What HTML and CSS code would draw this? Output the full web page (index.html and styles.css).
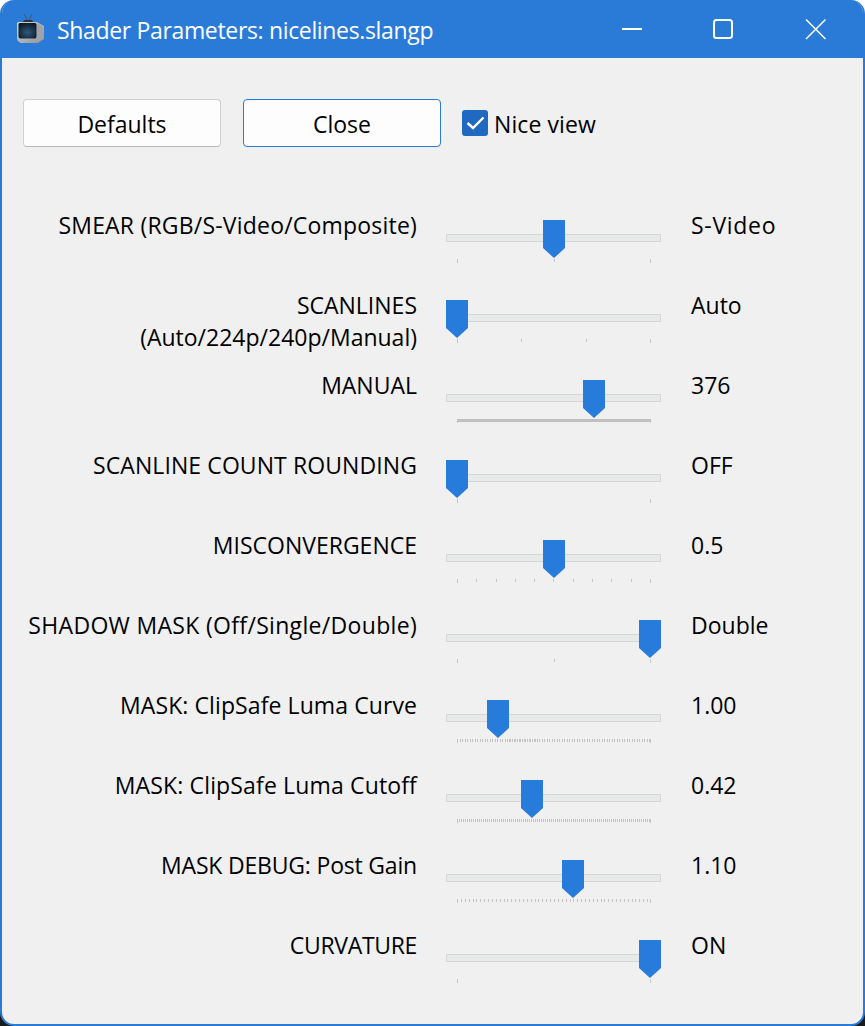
FILE: index.html
```html
<!DOCTYPE html>
<html lang="en">
<head>
<meta charset="utf-8">
<title>Shader Parameters: nicelines.slangp</title>
<link rel="stylesheet" href="styles.css">
</head>
<body>
<div class="window">
  <header class="titlebar">
    <svg class="app-icon" width="28" height="30" viewBox="0 0 28 30">
      <defs>
        <linearGradient id="tvbody" x1="0" y1="0" x2="1" y2="1"><stop offset="0" stop-color="#d4d6da"/><stop offset="1" stop-color="#8f9296"/></linearGradient>
        <radialGradient id="tvscreen" cx="0.5" cy="0.6" r="0.65"><stop offset="0" stop-color="#2f5a80"/><stop offset="1" stop-color="#0d1722"/></radialGradient>
      </defs>
      <path d="M7 0 L10.5 6 M15 0.5 L12 6" stroke="#4a5560" stroke-width="1" fill="none"/>
      <path d="M7 6 H15 L16 8 H6 Z" fill="#2c343c"/>
      <path d="M1 8 H20 L27 12 V25 L21 29 H4 Q0 28 0 24 V9 Z" fill="url(#tvbody)"/>
      <path d="M20 9 L26 12.5 V25 L20 28 Z" fill="#a0a3a8"/>
      <path d="M2.5 9 H18 Q19.5 9 19.5 11 V22 Q19.5 24.5 18 24.5 H3.5 Q1.5 24.5 1.5 22 V10.5 Q1.5 9 2.5 9 Z" fill="url(#tvscreen)"/>
    </svg>
    <span class="title">Shader Parameters: nicelines.slangp</span>
    <div class="win-controls">
      <svg class="win-btn" width="92" height="58" viewBox="0 0 92 58"><path d="M36 29 H56" stroke="#fff" stroke-width="2"/></svg>
      <svg class="win-btn" width="92" height="58" viewBox="0 0 92 58"><rect x="36" y="20" width="18" height="18" rx="2.5" fill="none" stroke="#fff" stroke-width="2"/></svg>
      <svg class="win-btn" width="92" height="58" viewBox="0 0 92 58"><path d="M36 19.5 L55.5 39 M55.5 19.5 L36 39" stroke="#fff" stroke-width="1.5" fill="none"/></svg>
    </div>
  </header>
  <main class="content">
    <div class="toolbar">
      <button class="btn">Defaults</button>
      <button class="btn btn-focus">Close</button>
      <label class="check">
        <span class="check-box"><svg width="26" height="26" viewBox="0 0 26 26"><path d="M5.5 13 L11 18 L21.5 7.5" fill="none" stroke="#fff" stroke-width="2.4"/></svg></span>
        <span class="check-text">Nice view</span>
      </label>
    </div>
    <div class="params">
      <div class="label ls-p2">SMEAR (RGB/S-Video/Composite)</div>
      <div class="slider"><div class="track"><span class="thumb" style="left:97px"></span></div><div class="ticks"><i></i><i></i><i></i></div></div>
      <div class="value ls-p6">S-Video</div>

      <div class="label">SCANLINES<br>(Auto/224p/240p/Manual)</div>
      <div class="slider"><div class="track"><span class="thumb" style="left:0"></span></div><div class="ticks"><i></i><i></i><i></i><i></i></div></div>
      <div class="value">Auto</div>

      <div class="label">MANUAL</div>
      <div class="slider"><div class="track"><span class="thumb" style="left:137px"></span></div><div class="ticks ticks-solid"><i></i><i></i></div></div>
      <div class="value">376</div>

      <div class="label ls-p1">SCANLINE COUNT ROUNDING</div>
      <div class="slider"><div class="track"><span class="thumb" style="left:0"></span></div><div class="ticks"><i></i><i></i></div></div>
      <div class="value">OFF</div>

      <div class="label">MISCONVERGENCE</div>
      <div class="slider"><div class="track"><span class="thumb" style="left:97px"></span></div><div class="ticks"><i></i><i></i><i></i><i></i><i></i><i></i><i></i><i></i><i></i><i></i><i></i></div></div>
      <div class="value">0.5</div>

      <div class="label ls-p3">SHADOW MASK (Off/Single/Double)</div>
      <div class="slider"><div class="track"><span class="thumb" style="left:193px"></span></div><div class="ticks"><i></i><i></i><i></i></div></div>
      <div class="value">Double</div>

      <div class="label ls-p1">MASK: ClipSafe Luma Curve</div>
      <div class="slider"><div class="track"><span class="thumb" style="left:41px"></span></div><div class="ticks ticks-dense step-2-5"><i></i><i></i></div></div>
      <div class="value">1.00</div>

      <div class="label ls-p15">MASK: ClipSafe Luma Cutoff</div>
      <div class="slider"><div class="track"><span class="thumb" style="left:75px"></span></div><div class="ticks ticks-dense step-2"><i></i><i></i></div></div>
      <div class="value">0.42</div>

      <div class="label ls-m2">MASK DEBUG: Post Gain</div>
      <div class="slider"><div class="track"><span class="thumb" style="left:116px"></span></div><div class="ticks ticks-dense step-3-9"><i></i><i></i></div></div>
      <div class="value">1.10</div>

      <div class="label ls-m3">CURVATURE</div>
      <div class="slider"><div class="track"><span class="thumb" style="left:193px"></span></div><div class="ticks"><i></i><i></i></div></div>
      <div class="value">ON</div>
    </div>
  </main>
</div>
</body>
</html>
```
FILE: styles.css
```css
* { box-sizing: border-box; }
html, body { margin: 0; height: 100%; }
body {
  background: linear-gradient(#fff 0 50%, #1a1a1a 50% 100%);
  font-family: "Open Sans", "Noto Sans", sans-serif;
  font-size: 23px;
  color: #000;
  overflow: hidden;
}
.window {
  width: 865px;
  height: 1026px;
  display: flex;
  flex-direction: column;
  background: #f0f0f0;
  border: 2px solid #2a7bd8;
  border-top: 0;
  border-radius: 14px;
  overflow: hidden;
}
.titlebar {
  height: 58px;
  flex: none;
  background: #2a7bd8;
  color: #fff;
  display: flex;
  align-items: center;
  padding-left: 15px;
}
.app-icon { flex: none; margin-right: 12px; }
.title { flex: 1; white-space: nowrap; letter-spacing: -0.34px; padding-top: 2px; }
.win-controls { display: flex; flex: none; margin-right: 1px; }
.win-btn { display: block; }
.content { flex: 1; padding: 41px 0 0; }
.toolbar { display: flex; align-items: center; padding-left: 21px; gap: 22px; }
.btn {
  width: 198px;
  height: 48px;
  background: #fdfdfd;
  border: 1px solid #d0d0d0;
  border-bottom-color: #b8b8b8;
  border-radius: 4px;
  font: inherit;
  color: #000;
  padding: 2px 0 0;
}
.btn-focus { border-color: #2a7bd8; }
.check { display: flex; align-items: center; gap: 6px; margin-left: -1px; }
.check-box {
  width: 26px;
  height: 26px;
  background: #2069c2;
  border-radius: 3px;
  display: block;
}
.check-box svg { display: block; }
.check-text { padding-top: 2px; letter-spacing: 0.1px; }
.params {
  margin-top: 62px;
  display: grid;
  grid-template-columns: 415px 215px 1fr;
  grid-auto-rows: 80px;
  column-gap: 29px;
  line-height: 32px;
}
.label { text-align: right; white-space: nowrap; }
.value { padding-left: 1px; }
.ls-p1 { letter-spacing: 0.09px; }
.ls-p15 { letter-spacing: 0.15px; }
.ls-p2 { letter-spacing: 0.2px; }
.ls-p3 { letter-spacing: 0.32px; }
.ls-p6 { letter-spacing: 0.7px; }
.ls-m2 { letter-spacing: -0.19px; }
.ls-m3 { letter-spacing: -0.33px; }
.slider { padding-top: 25px; }
.track {
  position: relative;
  height: 8px;
  background: #e8eaea;
  border: 1px solid #d6d6d6;
}
.thumb {
  position: absolute;
  top: -15px;
  margin-left: -1px;
  width: 22px;
  height: 38px;
  background: #277bda;
  clip-path: polygon(0 0, 100% 0, 100% 74%, 50% 100%, 0 74%);
}
.ticks {
  position: relative;
  margin: 17px 0 0 11px;
  width: 194px;
  height: 4px;
  display: flex;
  justify-content: space-between;
}
.ticks i {
  display: block;
  width: 1px;
  height: 3px;
  background: #c4c4c4;
}
.ticks i:first-child, .ticks i:last-child { height: 4px; }
.ticks-solid::before {
  content: "";
  position: absolute;
  left: 0;
  right: 0;
  top: 0;
  height: 3px;
  background: #c0c0c0;
}
.ticks-dense::before {
  content: "";
  position: absolute;
  left: 0;
  right: 0;
  top: 0;
  height: 3px;
}
.step-2-5::before { background: repeating-linear-gradient(to right, #c4c4c4 0 1px, transparent 1px 2.5px); }
.step-2::before { background: repeating-linear-gradient(to right, #c4c4c4 0 1px, transparent 1px 2px); }
.step-3-9::before { background: repeating-linear-gradient(to right, #c4c4c4 0 1px, transparent 1px 3.88px); }
```
